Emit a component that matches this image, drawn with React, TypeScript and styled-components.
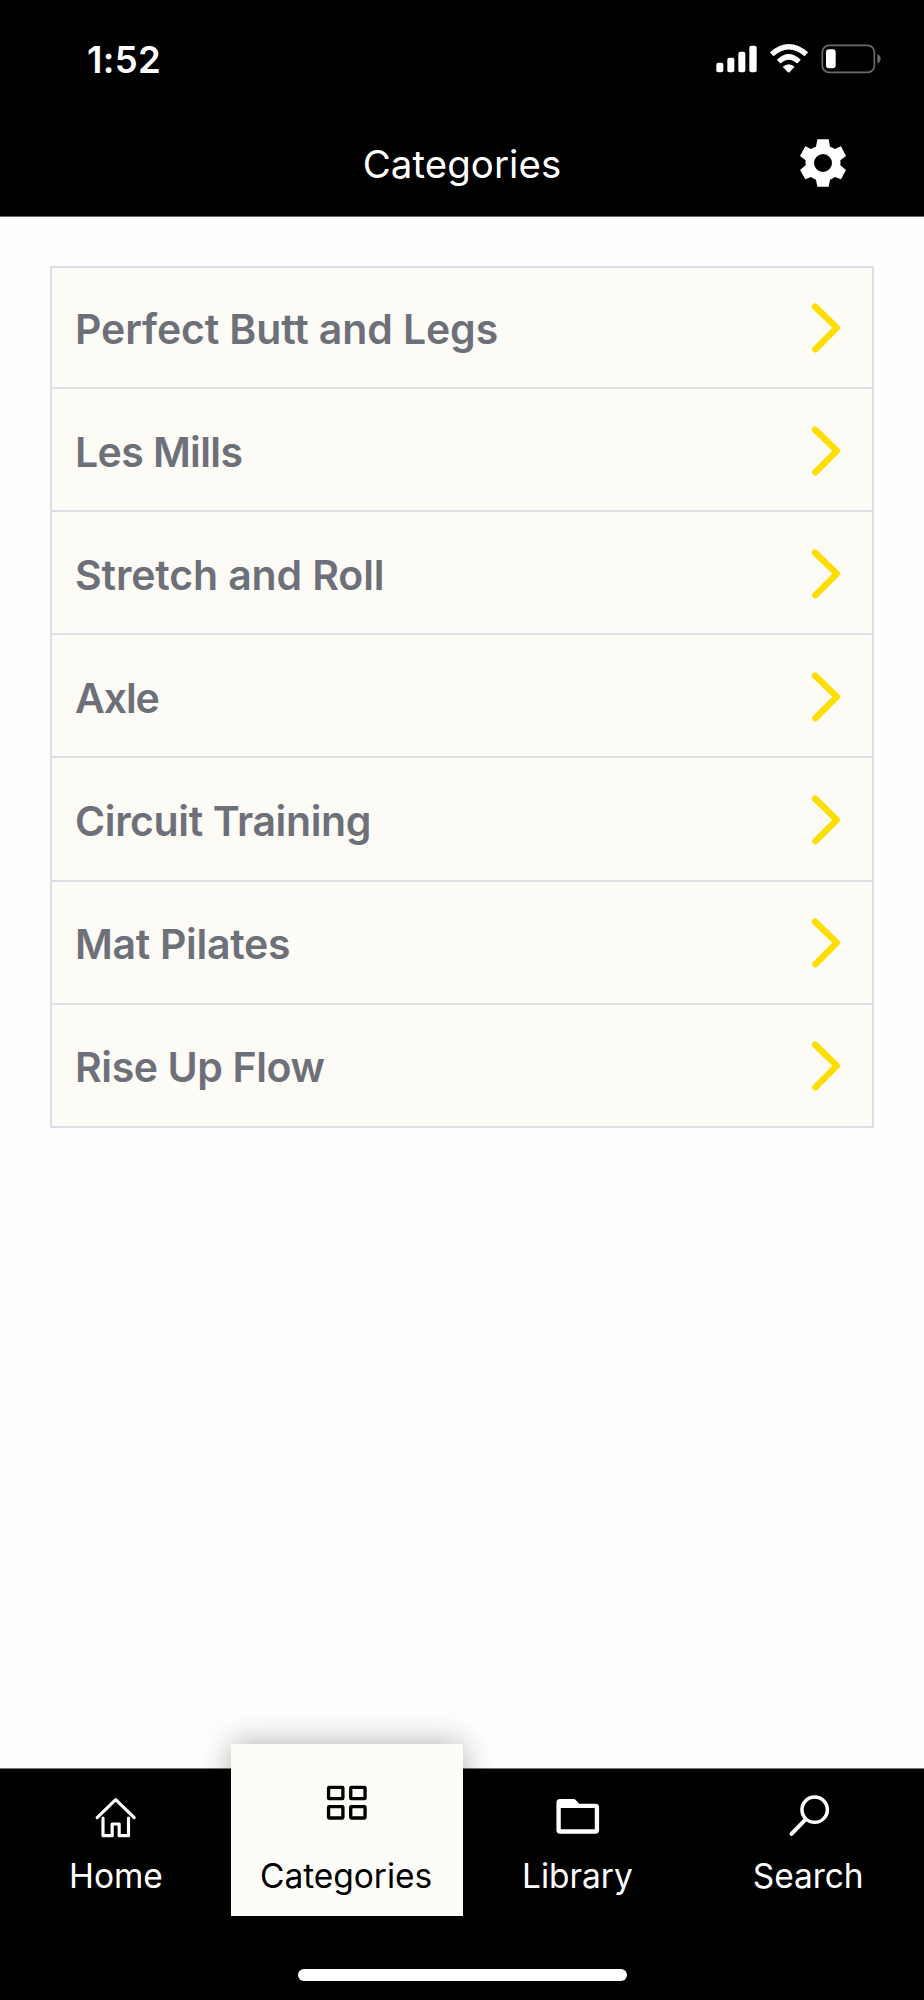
import React from "react";
import styled, { createGlobalStyle } from "styled-components";

const GlobalStyle = createGlobalStyle`
  * { box-sizing: border-box; }
  body { margin: 0; background: #fff; }
`;

const Screen = styled.div`
  display: flex;
  flex-direction: column;
  width: 924px;
  height: 2000px;
  overflow: hidden;
  background: #fefefe;
  font-family: Inter, "Liberation Sans", sans-serif;
  svg { display: block; flex: none; }
`;

const Header = styled.header`
  height: 217px;
  background: #000;
  border-bottom: 1px solid #6c6c6c;
  color: #fff;
`;

const StatusBar = styled.div`
  display: flex;
  align-items: center;
  justify-content: space-between;
  height: 118px;
  padding: 0 43px 0 87px;
`;

const Clock = styled.span`
  padding-top: 1px;
  font-size: 36.5px;
  font-weight: 600;
  line-height: 44px;
  letter-spacing: 0.3px;
`;

const TitleBar = styled.div`
  display: grid;
  grid-template-columns: 1fr auto 1fr;
  align-items: center;
  height: 90px;
  padding-right: 77.5px;
  padding-left: 77.5px;
`;

const Title = styled.h1`
  grid-column: 2;
  margin: 0;
  padding-top: 2px;
  font-size: 38.4px;
  font-weight: 400;
  line-height: 48px;
  letter-spacing: 0.1px;
`;

const SettingsButton = styled.button`
  justify-self: end;
  padding: 0;
  border: 0;
  background: none;
`;

const List = styled.ul`
  width: 824px;
  margin: 49px 0 0 50px;
  padding: 0;
  list-style: none;
  border: 2px solid #dce0e3;
  border-bottom: 0;
  background: #fcfbf6;
`;

const Row = styled.li`
  display: flex;
  align-items: center;
  justify-content: space-between;
  height: 123.15px;
  padding: 2px 32px 0 23px;
  border-bottom: 2px solid #dce0e3;
  &:first-child { height: 121px; padding-top: 0; }
`;

const RowLabel = styled.span<{ $tracking: number }>`
  padding-top: 2px;
  color: #6e7079;
  font-size: 41px;
  font-weight: 600;
  line-height: 50px;
  letter-spacing: ${(p) => p.$tracking}px;
`;

const TabBar = styled.nav`
  display: grid;
  grid-template-columns: repeat(4, 1fr);
  align-items: start;
  height: 232px;
  margin-top: auto;
  padding-left: 1px;
  border-top: 1px solid #777;
  background: #000;
  position: relative;
`;

const Tab = styled.a<{ $active?: boolean }>`
  display: flex;
  flex-direction: column;
  align-items: center;
  gap: ${(p) => (p.$active ? 29 : 16)}px;
  height: ${(p) => (p.$active ? 172 : 147)}px;
  margin: ${(p) => (p.$active ? "-25px 0 0 -1px" : "0")};
  padding-top: ${(p) => (p.$active ? 35 : 23)}px;
  background: ${(p) => (p.$active ? "#fcfdf9" : "transparent")};
  color: ${(p) => (p.$active ? "#000" : "#fff")};
  box-shadow: ${(p) => (p.$active ? "0 0 30px rgba(0, 0, 0, 0.32)" : "none")};
`;

const TabLabel = styled.span`
  margin-right: 1px;
  font-size: 33.5px;
  font-weight: 400;
  line-height: 40px;
  letter-spacing: -0.05px;
`;

const HomeIndicator = styled.div`
  position: absolute;
  bottom: 19px;
  left: 298px;
  width: 329px;
  height: 12px;
  border-radius: 6px;
  background: #fff;
`;

const StatusIcons = () => (
  <svg width="165" height="30" viewBox="108 71 495 90" fill="#fff">
    <rect x="109" y="127" width="21" height="29" rx="6" />
    <rect x="142" y="112" width="21" height="44" rx="6" />
    <rect x="175" y="94" width="21" height="62" rx="6" />
    <rect x="208" y="76" width="22" height="80" rx="6" />
    <g fill="none" stroke="#fff" strokeWidth="16">
      <path d="M275 102 Q326 57 379 102" />
      <path d="M296 124 Q326 95 357 124" />
    </g>
    <path d="M308 139 Q326 124 344 139 L329 155 Q326 158 323 155 Z" />
    <rect x="427" y="75" width="156" height="81" rx="20" fill="none" stroke="#6b6b6b" strokeWidth="5" />
    <rect x="438" y="87" width="29" height="57" rx="9" />
    <path d="M592 102 Q602 106 602 115.500 Q602 125 592 129 Z" fill="#6b6b6b" />
  </svg>
);

const GearIcon = () => (
  <svg width="48" height="48" viewBox="356 356 144 144" fill="#fff" fillRule="evenodd">
    <path d="M411 357H445L449 379Q457 381 464 386L482 378L497 407L480 420Q481 428 480 435L497 449L482 477L464 470Q457 475 449 478L445 499H411L407 478Q399 475 392 470L375 477L359 449L376 435Q375 428 376 420L359 407L375 378L392 386Q399 381 407 379ZM428 401A27 27 0 1 0 428 455A27 27 0 1 0 428 401Z" />
  </svg>
);

const Chevron = () => (
  <svg width="29" height="50" viewBox="0 0 29 50" fill="none" stroke="#ffdd00" strokeWidth="6.4" strokeLinecap="round" strokeLinejoin="round">
    <path d="M4 3.600 L25.800 24.700 L4.400 46.300" />
  </svg>
);

const HomeIcon = () => (
  <svg width="48" height="48" viewBox="277.5 216 144 144" fill="none" stroke="#fff" strokeWidth="9.5" strokeLinecap="round" strokeLinejoin="round">
    <path d="M293 293L348.500 239L404 293" />
    <path d="M310.500 294V347H338V312H359V347H387V294" />
  </svg>
);

const GridIcon = () => (
  <svg width="48" height="48" viewBox="308.8 177 144 144" fill="none" stroke="#000" strokeWidth="10">
    <rect x="325.500" y="202" width="43" height="34" rx="2" />
    <rect x="392" y="202" width="43" height="34" rx="2" />
    <rect x="325.500" y="260" width="43" height="34" rx="2" />
    <rect x="392" y="260" width="43" height="34" rx="2" />
  </svg>
);

const FolderIcon = () => (
  <svg width="48" height="48" viewBox="221.7 216 144 144" fill="#fff" fillRule="evenodd">
    <path d="M240 237H280Q284 237 287 240L297 251H346Q357 251 357 262V330Q357 341 346 341H240Q229 341 229 330V248Q229 237 240 237ZM242 264V328H344V264Z" />
  </svg>
);

const SearchIcon = () => (
  <svg width="48" height="48" viewBox="914 216 144 144" fill="none" stroke="#fff" strokeLinecap="round">
    <circle cx="1003" cy="269" r="38" strokeWidth="10.5" />
    <path d="M976 298L933.500 341.500" strokeWidth="12" />
  </svg>
);

const categories = [
  { name: "Perfect Butt and Legs", tracking: -0.12 },
  { name: "Les Mills", tracking: -0.6 },
  { name: "Stretch and Roll", tracking: -0.12 },
  { name: "Axle", tracking: -1.1 },
  { name: "Circuit Training", tracking: -0.4 },
  { name: "Mat Pilates", tracking: -0.3 },
  { name: "Rise Up Flow", tracking: -0.4 },
];

const tabs = [
  { label: "Home", Icon: HomeIcon },
  { label: "Categories", Icon: GridIcon, active: true },
  { label: "Library", Icon: FolderIcon },
  { label: "Search", Icon: SearchIcon },
];

export default function App() {
  return (
    <Screen>
      <GlobalStyle />
      <Header>
        <StatusBar>
          <Clock>1:52</Clock>
          <StatusIcons />
        </StatusBar>
        <TitleBar>
          <Title>Categories</Title>
          <SettingsButton aria-label="Settings">
            <GearIcon />
          </SettingsButton>
        </TitleBar>
      </Header>
      <List>
        {categories.map(({ name, tracking }) => (
          <Row key={name}>
            <RowLabel $tracking={tracking}>{name}</RowLabel>
            <Chevron />
          </Row>
        ))}
      </List>
      <TabBar>
        {tabs.map(({ label, Icon, active }) => (
          <Tab key={label} $active={active}>
            <Icon />
            <TabLabel>{label}</TabLabel>
          </Tab>
        ))}
        <HomeIndicator />
      </TabBar>
    </Screen>
  );
}
